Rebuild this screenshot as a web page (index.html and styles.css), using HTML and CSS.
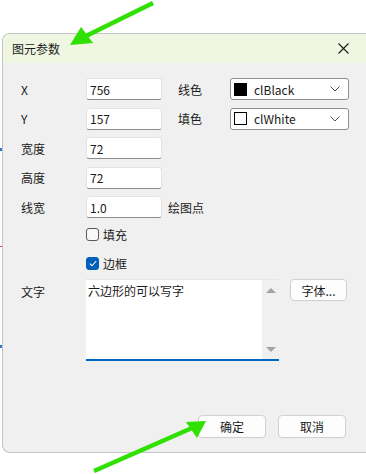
FILE: index.html
```html
<!DOCTYPE html>
<html lang="zh-CN">
<head>
    <meta charset="UTF-8">
    <meta name="viewport" content="width=device-width, initial-scale=1.0">
    <title>图元参数</title>
    <link rel="stylesheet" href="styles.css">
</head>
<body>

    <div class="desk">
        <span class="mark mark-blue" style="top: 148px;"></span>
        <span class="mark mark-red" style="top: 246px;"></span>
        <span class="mark mark-blue" style="top: 345px;"></span>

        <div class="dialog">
            <div class="titlebar">
                <span class="title">图元参数</span>
                <svg class="close" width="11" height="11" viewBox="0 0 11 11">
                    <path d="M0.5 0.5 L10.5 10.5 M10.5 0.5 L0.5 10.5" stroke="#1a1a1a" stroke-width="1.1" fill="none"/>
                </svg>
            </div>

            <div class="body">
                <div class="form">
                    <label class="lbl">X</label>
                    <div class="field">756</div>
                    <div></div>
                    <label class="lbl">线色</label>
                    <div class="combo">
                        <span class="swatch swatch-black"></span>
                        <span class="combo-text">clBlack</span>
                        <svg class="chev" width="10" height="6" viewBox="0 0 10 6"><path d="M0.5 0.5 L5 5 L9.5 0.5" stroke="#555" fill="none"/></svg>
                    </div>

                    <label class="lbl">Y</label>
                    <div class="field">157</div>
                    <div></div>
                    <label class="lbl">填色</label>
                    <div class="combo">
                        <span class="swatch swatch-white"></span>
                        <span class="combo-text">clWhite</span>
                        <svg class="chev" width="10" height="6" viewBox="0 0 10 6"><path d="M0.5 0.5 L5 5 L9.5 0.5" stroke="#555" fill="none"/></svg>
                    </div>

                    <label class="lbl">宽度</label>
                    <div class="field">72</div>
                    <div class="rest"></div>

                    <label class="lbl">高度</label>
                    <div class="field">72</div>
                    <div class="rest"></div>

                    <label class="lbl">线宽</label>
                    <div class="field">1.0</div>
                    <div class="rest note">绘图点</div>
                </div>

                <div class="checks">
                    <div class="check">
                        <span class="box"></span>
                        <span>填充</span>
                    </div>
                    <div class="check">
                        <span class="box box-on">
                            <svg width="8" height="7" viewBox="0 0 8 7"><path d="M0.8 3.6 L3 5.8 L7.2 1" stroke="#fff" stroke-width="1.1" fill="none"/></svg>
                        </span>
                        <span>边框</span>
                    </div>
                </div>

                <div class="text-row">
                    <label class="lbl lbl-top">文字</label>
                    <div class="memo">
                        <div class="memo-text">六边形的可以写字</div>
                        <div class="scroll">
                            <span class="tri tri-up"></span>
                            <span class="tri tri-down"></span>
                        </div>
                    </div>
                    <button class="btn btn-font">字体...</button>
                </div>

                <div class="footer">
                    <button class="btn">确定</button>
                    <button class="btn">取消</button>
                </div>
            </div>
        </div>

        <svg class="arrows" width="366" height="474" viewBox="0 0 366 474">
            <line x1="153" y1="3" x2="84" y2="37" stroke="#2fe000" stroke-width="4.5"/>
            <polygon points="70,45 81,27 93,43" fill="#2fe000"/>
            <line x1="94" y1="471" x2="192" y2="428" stroke="#2fe000" stroke-width="4.5"/>
            <polygon points="206,421 186,422 197,438" fill="#2fe000"/>
        </svg>
    </div>

</body>
</html>
```

FILE: styles.css
```css
body {
    margin: 0;
    background-color: #ffffff;
    font-family: "Noto Sans CJK SC", "Noto Sans", sans-serif;
    font-size: 12px;
    color: #1a1a1a;
}

.desk {
    position: relative;
    width: 366px;
    height: 474px;
    overflow: hidden;
    padding: 33px 0 0 2px;
    box-sizing: border-box;
}

.mark {
    position: absolute;
    left: 0;
    width: 2px;
    height: 3px;
}

.mark-blue {
    background-color: #2f74d0;
}

.mark-red {
    background-color: #e04040;
    height: 1px;
}

.dialog {
    width: 380px;
    height: 420px;
    background-color: #f0f0f0;
    border: 1px solid #c4c4c4;
    border-right: none;
    border-radius: 8px 0 0 8px;
    box-sizing: border-box;
    display: flex;
    flex-direction: column;
    overflow: hidden;
}

.titlebar {
    height: 29px;
    background-color: #eff7e2;
    display: flex;
    align-items: center;
    padding-left: 9px;
}

.title {
    font-size: 12px;
    flex: 1;
}

.close {
    margin-right: 33px;
}

.body {
    flex: 1;
    display: flex;
    flex-direction: column;
    padding: 15px 0 14px 18px;
}

.form {
    display: grid;
    grid-template-columns: 65px 76px 16px 52px 119px;
    grid-auto-rows: 22px;
    row-gap: 7.5px;
}

.lbl {
    display: flex;
    align-items: center;
}

.rest {
    grid-column: 3 / 6;
}

.note {
    display: flex;
    align-items: center;
    padding-left: 6px;
}

.field {
    background-color: #ffffff;
    border: 1px solid #e3e3e3;
    border-bottom-color: #8c8c8c;
    border-radius: 3px;
    padding-left: 3px;
    display: flex;
    align-items: center;
}

.combo {
    background-color: #ffffff;
    border: 1px solid #8f8f8f;
    border-radius: 3px;
    display: flex;
    align-items: center;
    padding: 0 8px 0 3px;
    box-sizing: border-box;
    height: 22px;
}

.swatch {
    width: 11px;
    height: 11px;
    border: 1px solid #000;
    margin-right: 7px;
}

.swatch-black {
    background-color: #000;
}

.swatch-white {
    background-color: #fff;
}

.combo-text {
    flex: 1;
}

.checks {
    display: flex;
    flex-direction: column;
    gap: 13px;
    padding-left: 65px;
    margin-top: 8px;
}

.check {
    display: flex;
    align-items: center;
    gap: 4px;
    height: 16px;
}

.box {
    width: 11px;
    height: 11px;
    border: 1px solid #5a5a5a;
    border-radius: 3px;
    background-color: #f8f8f8;
    display: flex;
    align-items: center;
    justify-content: center;
}

.box-on {
    background-color: #005fb8;
    border-color: #005fb8;
}

.text-row {
    display: flex;
    align-items: flex-start;
    margin-top: 8px;
}

.lbl-top {
    width: 65px;
    padding-top: 4px;
}

.memo {
    width: 193px;
    height: 82px;
    background-color: #ffffff;
    border-top: 1px solid #e6e6e6;
    border-bottom: 2px solid #0067c0;
    box-sizing: border-box;
    display: flex;
}

.memo-text {
    flex: 1;
    padding: 2px 0 0 2px;
}

.scroll {
    width: 17px;
    background-color: #f0f0f0;
    display: flex;
    flex-direction: column;
    justify-content: space-between;
    align-items: center;
    padding: 8px 0 7px;
}

.tri {
    width: 0;
    height: 0;
    border-left: 5px solid transparent;
    border-right: 5px solid transparent;
}

.tri-up {
    border-bottom: 5px solid #a3a3a3;
}

.tri-down {
    border-top: 5px solid #a3a3a3;
}

.btn {
    width: 68px;
    height: 23px;
    background-color: #fdfdfd;
    border: 1px solid #d0d0d0;
    border-radius: 4px;
    font-family: inherit;
    font-size: 12px;
    color: #1a1a1a;
    padding: 0;
}

.btn-font {
    width: 57px;
    height: 22px;
    margin-left: 11px;
}

.footer {
    margin-top: auto;
    display: flex;
    gap: 12px;
    padding-left: 177px;
}

.arrows {
    position: absolute;
    top: 0;
    left: 0;
}
```
